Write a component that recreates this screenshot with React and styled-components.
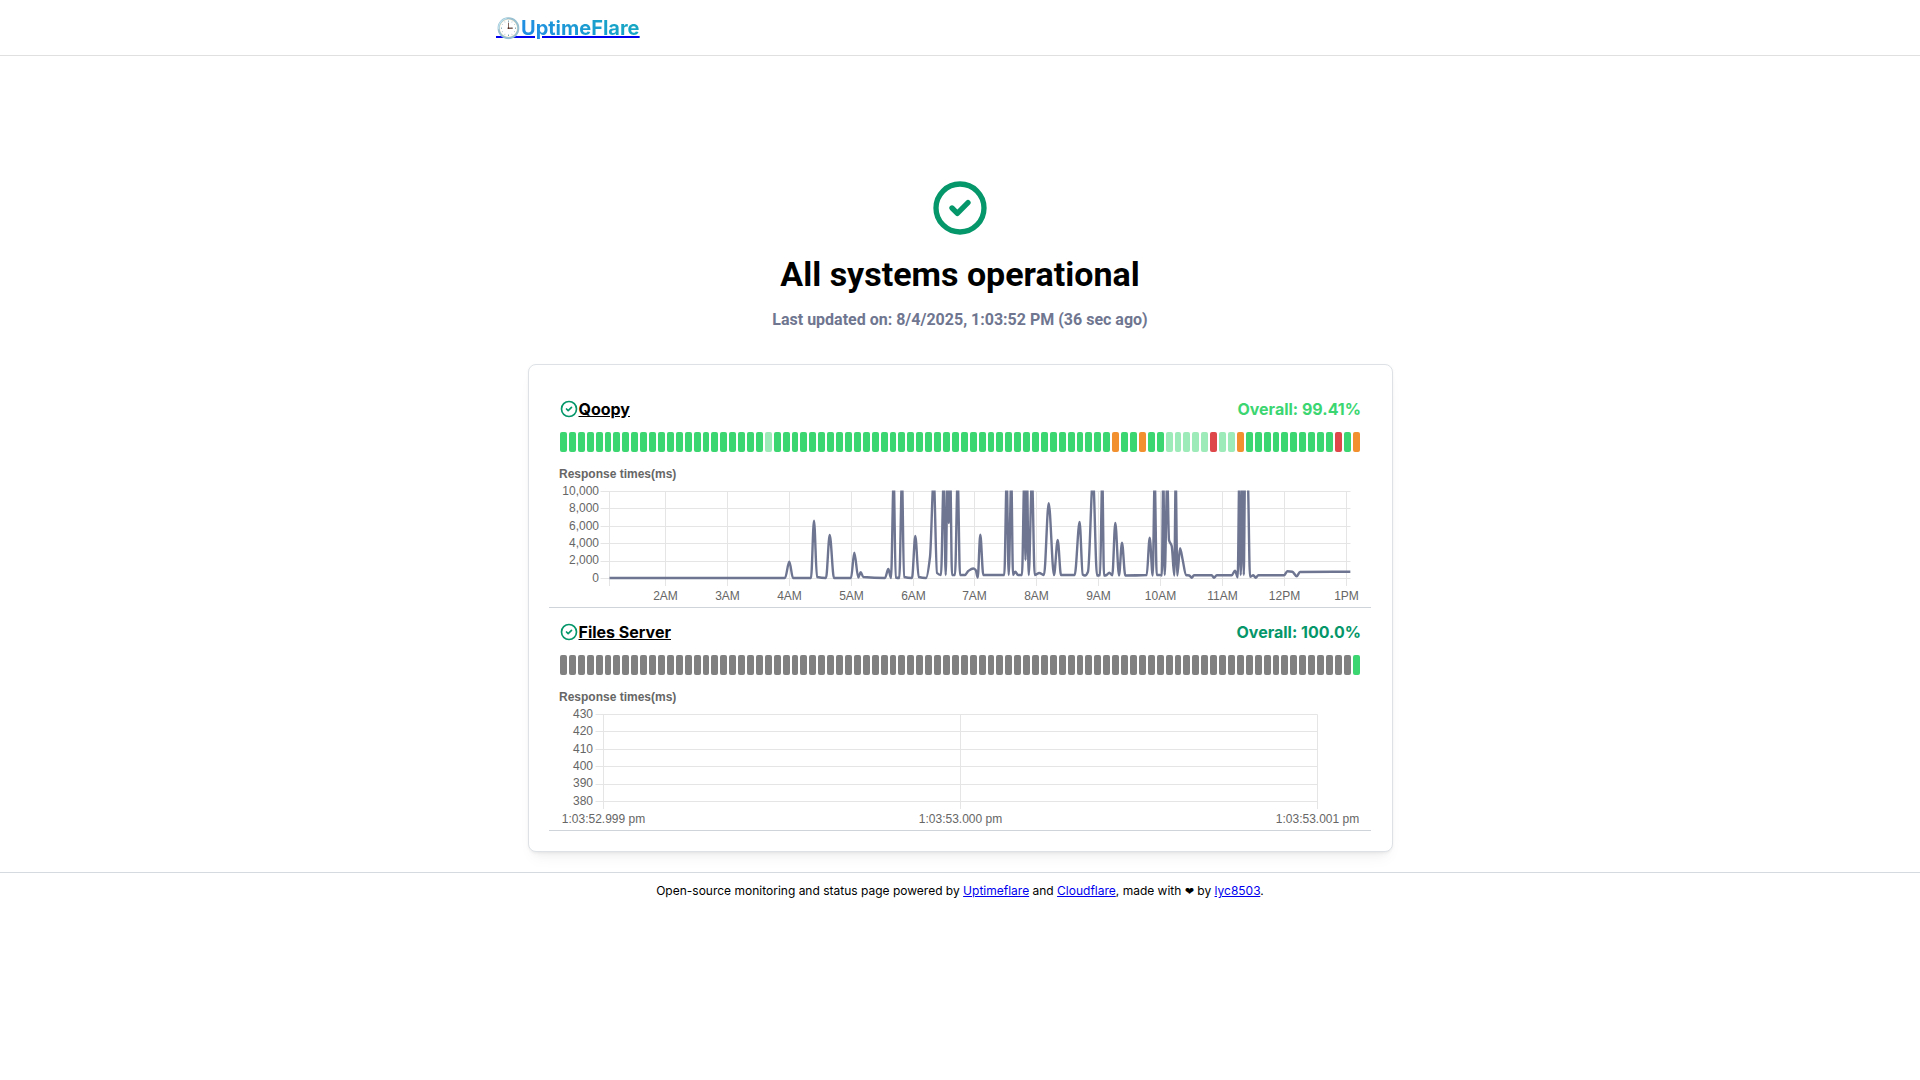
import React from 'react';
import styled, { createGlobalStyle } from 'styled-components';

const GlobalStyle = createGlobalStyle`
    html, body {
        margin: 0;
        padding: 0;
        background: #fff;
        color: #000;
        font-family: Inter, 'Liberation Sans', sans-serif;
    }
`;

// Header
const Header = styled.header`
    height: 55px;
    border-bottom: 1px solid #e0e0e0;
`;

const HeaderInner = styled.div`
    box-sizing: border-box;
    width: 960px;
    height: 100%;
    margin: 0 auto;
    padding: 0 16px;
    display: flex;
    align-items: center;
`;

const LogoLink = styled.a`
    color: #0000ee;
    font-size: 20px;
    font-weight: 700;
    line-height: 1.3;
    text-decoration: underline;
`;

const GradientText = styled.span`
    background: linear-gradient(45deg, #228be6, #15aabf);
    -webkit-background-clip: text;
    background-clip: text;
    -webkit-text-fill-color: transparent;
`;

// Overall status
const Main = styled.main`
    padding-top: 120px;
    display: flex;
    flex-direction: column;
    align-items: center;
`;

const BigIcon = styled.svg`
    display: block;
    width: 64px;
    height: 64px;
    fill: none;
    stroke: #059669;
    stroke-width: 2;
    stroke-linecap: round;
    stroke-linejoin: round;
`;

const Title = styled.h1`
    margin: 12px 0 0;
    font-family: Roboto, 'Liberation Sans', sans-serif;
    font-size: 34px;
    line-height: 44px;
    font-weight: 700;
`;

const Updated = styled.div`
    margin-top: 11px;
    font-family: Roboto, 'Liberation Sans', sans-serif;
    font-size: 16px;
    line-height: 25px;
    font-weight: 700;
    color: #6f7690;
`;

// Monitor card
const Card = styled.section`
    box-sizing: border-box;
    width: 865px;
    margin: 32px 0 0 1px;
    padding: 20px 21px 20px 20px;
    background: #fff;
    border: 1px solid #dee2e6;
    border-radius: 8px;
    box-shadow: 0 1px 3px rgba(0, 0, 0, 0.05), 0 10px 15px -5px rgba(0, 0, 0, 0.05), 0 7px 7px -5px rgba(0, 0, 0, 0.04);
`;

const Item = styled.article`
    height: 223px;
    box-sizing: border-box;
    padding: 10px 10px 0;
    border-bottom: 1px solid #ced4da;
`;

const TitleRow = styled.div`
    height: 28px;
    display: flex;
    align-items: center;
    justify-content: space-between;
`;

const Name = styled.div`
    display: flex;
    align-items: center;
`;

const SmallIcon = styled.svg`
    display: block;
    width: 20px;
    height: 20px;
    margin-right: -0.5px;
    fill: none;
    stroke: #059669;
    stroke-width: 2;
    stroke-linecap: round;
    stroke-linejoin: round;
`;

const NameLink = styled.a`
    color: #000;
    font-size: 16px;
    font-weight: 700;
    line-height: 1.3;
    text-decoration: underline;
`;

const Overall = styled.div`
    font-size: 16px;
    font-weight: 700;
    color: ${(p) => p.$color};
`;

const BarRow = styled.div`
    margin: 9px 1px 0;
    display: flex;
    gap: 2px;
    height: 20px;
`;

const Bar = styled.div`
    flex: 1;
    border-radius: 2px;
    background: ${(p) => p.$color};
`;

const ChartTitle = styled.div`
    margin-top: 15px;
    font-family: 'Liberation Sans', Arial, sans-serif;
    font-size: 12px;
    line-height: 14px;
    font-weight: 700;
    color: #666;
`;

const ChartSvg = styled.svg`
    display: block;
    margin-top: 2px;
    width: 802px;
    height: 124px;
    overflow: hidden;

    text {
        font-family: 'Liberation Sans', Arial, sans-serif;
        font-size: 12px;
        fill: #666;
    }

    .grid {
        stroke: #e5e5e5;
        stroke-width: 1;
    }

    .line {
        fill: none;
        stroke: #6e7591;
        stroke-width: 2.4;
        stroke-linejoin: round;
    }
`;

// Footer
const Footer = styled.footer`
    margin-top: 20px;
    border-top: 1px solid #d5d9e0;
    padding-top: 9px;
    text-align: center;
    font-size: 12px;
    line-height: 18px;

    a {
        color: #0000ee;
    }
`;

const Heart = styled.span`
    font-family: 'DejaVu Sans', sans-serif;
    font-size: 11px;
`;

const GREEN = '#3bd671';
const LIGHT = '#9debb8';
const ORANGE = '#f29030';
const RED = '#df484a';
const GRAY = '#808080';

const qoopyBars = Array.from({ length: 90 }, (_, i) => {
    if ([62, 65, 76, 89].includes(i)) return ORANGE;
    if ([73, 87].includes(i)) return RED;
    if ([23, 68, 69, 70, 71, 72, 74, 75].includes(i)) return LIGHT;
    return GREEN;
});

const filesBars = Array.from({ length: 90 }, (_, i) => (i === 89 ? GREEN : GRAY));

// chart coordinates: x is page px, TOP means the value runs over the chart area
const TOP = 478;
const LOW = 575;
const qoopyLine = [
    [609, 578], [785, 578], [789.3, 561.7], [793, 578], [811, 578], [814, 520.7], [817, 577], [826, 578],
    [829.7, 535], [834, 578], [851, 578], [854.3, 552.7], [858.3, 577.5], [860.7, 572.3], [863.3, 577], [885, 578],
    [888.3, 569], [891, 578], [893.7, TOP], [895.7, 577.5], [899.3, 578], [902, TOP], [904, 577], [912, 578],
    [915.3, 536], [918.7, 577], [926, 578], [930, 557], [933.7, TOP], [937, 573], [941, LOW], [943.7, TOP],
    [945.7, LOW], [947.5, TOP], [948.8, 523], [950.3, TOP], [952, LOW], [955, LOW], [957.7, TOP], [960, LOW],
    [965, LOW], [968.3, 571], [973.3, 568.5], [975.7, 570], [977.7, 577.5], [980.3, 534.7], [983.3, LOW], [1004.3, LOW],
    [1006.7, TOP], [1008.7, LOW], [1011.3, TOP], [1013, LOW], [1015.3, 571.7], [1018, LOW], [1022, LOW], [1024.3, TOP],
    [1025.5, 560], [1027, TOP], [1028.7, LOW], [1032, TOP], [1034.7, LOW], [1039.3, 573], [1044, LOW], [1048.7, 503.3],
    [1054, LOW], [1057.7, 540], [1061, LOW], [1074.7, LOW], [1079.6, 522], [1082.7, 574.5], [1085, 575.5], [1088, 571.7],
    [1093, TOP], [1097, 575.5], [1100, LOW], [1102.3, TOP], [1104, 575.5], [1106.7, LOW], [1109.3, 572.7], [1112.3, 575.3],
    [1115.3, 523], [1119, 575.5], [1122, 542.7], [1125.3, 575.5], [1146.7, LOW], [1149.7, 537.7], [1152.7, 575.5], [1154.7, TOP],
    [1156.7, LOW], [1160, LOW], [1161.8, 575.5], [1163.3, TOP], [1164.7, LOW], [1167.3, TOP], [1169, 540], [1171.7, 546],
    [1174.3, 575.5], [1175.7, TOP], [1177.3, 575.5], [1180, 548.3], [1182.7, 560], [1186, LOW], [1189.3, 575.5], [1191.7, 577.7],
    [1194, 575.3], [1211.7, 575.3], [1214, 577.7], [1216.7, 575.3], [1231.7, 575.3], [1235, 570.7], [1237.7, 577.3], [1239.3, TOP],
    [1240.7, LOW], [1242.6, TOP], [1243.8, LOW], [1245, TOP], [1247.7, TOP], [1250, 576.7], [1253.3, 575.3], [1255.7, 577.7],
    [1258.3, 575.3], [1284, 575.3], [1287.3, 571.3], [1292.3, 571.7], [1296.7, 576.3], [1300, 572], [1350.7, 571.7],
];

// monotone curve through the points so the spikes don't overshoot
const smoothPath = (points, originX, originY) => {
    const pts = points.map(([x, y]) => [x - originX, y - originY]);
    const slopes = pts.slice(1).map((p, i) => (p[1] - pts[i][1]) / (p[0] - pts[i][0]));
    const tangents = pts.map((_, i) => {
        const a = slopes[i - 1];
        const b = slopes[i];
        if (a === undefined) return b;
        if (b === undefined) return a;
        if (a * b <= 0) return 0;
        return (2 * a * b) / (a + b);
    });
    let d = `M${pts[0][0]} ${pts[0][1]}`;
    for (let i = 0; i < pts.length - 1; i++) {
        const [x0, y0] = pts[i];
        const [x1, y1] = pts[i + 1];
        const h = (x1 - x0) / 3;
        d += `C${(x0 + h).toFixed(2)} ${(y0 + tangents[i] * h).toFixed(2)} ${(x1 - h).toFixed(2)} ${(y1 - tangents[i + 1] * h).toFixed(2)} ${x1.toFixed(2)} ${y1.toFixed(2)}`;
    }
    return d;
};

const GRID_Y = [8.5, 25.5, 43.5, 60.5, 78.5, 95.5];
const LABEL_Y = [12, 29, 47, 64, 81, 99];

const ORIGIN_X = 559;
const ORIGIN_Y = 483;

const Chart = ({ yLabels, xTicks, axisX, endX, tickStart, labelEnd, line }) => (
    <ChartSvg viewBox="0 0 802 124">
        <defs>
            <clipPath id="plot">
                <rect x={axisX} y="7.5" width={endX - axisX} height="100" />
            </clipPath>
        </defs>
        {GRID_Y.map((y, i) => (
            <g key={y}>
                <line className="grid" x1={tickStart} x2={endX} y1={y} y2={y} />
                <text x={labelEnd} y={LABEL_Y[i]} textAnchor="end">{yLabels[i]}</text>
            </g>
        ))}
        {xTicks.map(({ x, label }) => (
            <g key={x}>
                <line className="grid" x1={x} x2={x} y1="8.5" y2="103" />
                {label && <text x={x} y="116.5" textAnchor="middle">{label}</text>}
            </g>
        ))}
        {line && <path className="line" clipPath="url(#plot)" d={smoothPath(line, ORIGIN_X, ORIGIN_Y)} />}
    </ChartSvg>
);

const CheckCircle = ({ as: Icon }) => (
    <Icon viewBox="0 0 24 24">
        <path d="M12 12m-9 0a9 9 0 1 0 18 0a9 9 0 1 0 -18 0" />
        <path d="M9 12l2 2l4 -4" />
    </Icon>
);

const hourTicks = [
    [609.5, ''], [665.5, '2AM'], [727.5, '3AM'], [789.5, '4AM'], [851.5, '5AM'], [913.5, '6AM'], [974.5, '7AM'],
    [1036.5, '8AM'], [1098.5, '9AM'], [1160.5, '10AM'], [1222.5, '11AM'], [1284.5, '12PM'], [1346.5, '1PM'],
].map(([x, label]) => ({ x: x - ORIGIN_X, label }));

const secondTicks = [
    [603.5, '1:03:52.999 pm'], [960.5, '1:03:53.000 pm'], [1317.5, '1:03:53.001 pm'],
].map(([x, label]) => ({ x: x - ORIGIN_X, label }));

const App = () => (
    <>
        <GlobalStyle />
        <Header>
            <HeaderInner>
                <LogoLink href="#">
                    🕒<GradientText>UptimeFlare</GradientText>
                </LogoLink>
            </HeaderInner>
        </Header>
        <Main>
            <CheckCircle as={BigIcon} />
            <Title>All systems operational</Title>
            <Updated>Last updated on: 8/4/2025, 1:03:52 PM (36 sec ago)</Updated>
            <Card>
                <Item>
                    <TitleRow>
                        <Name>
                            <CheckCircle as={SmallIcon} />
                            <NameLink href="#">Qoopy</NameLink>
                        </Name>
                        <Overall $color={GREEN}>Overall: 99.41%</Overall>
                    </TitleRow>
                    <BarRow>
                        {qoopyBars.map((color, i) => <Bar key={i} $color={color} />)}
                    </BarRow>
                    <ChartTitle>Response times(ms)</ChartTitle>
                    <Chart
                        yLabels={['10,000', '8,000', '6,000', '4,000', '2,000', '0']}
                        xTicks={hourTicks}
                        axisX={50.5}
                        endX={791.5}
                        tickStart={41.5}
                        labelEnd={40}
                        line={qoopyLine}
                    />
                </Item>
                <Item>
                    <TitleRow>
                        <Name>
                            <CheckCircle as={SmallIcon} />
                            <NameLink href="#">Files Server</NameLink>
                        </Name>
                        <Overall $color="#059669">Overall: 100.0%</Overall>
                    </TitleRow>
                    <BarRow>
                        {filesBars.map((color, i) => <Bar key={i} $color={color} />)}
                    </BarRow>
                    <ChartTitle>Response times(ms)</ChartTitle>
                    <Chart
                        yLabels={['430', '420', '410', '400', '390', '380']}
                        xTicks={secondTicks}
                        axisX={44.5}
                        endX={758.5}
                        tickStart={36.5}
                        labelEnd={34}
                    />
                </Item>
            </Card>
        </Main>
        <Footer>
            Open-source monitoring and status page powered by <a href="#">Uptimeflare</a> and{' '}
            <a href="#">Cloudflare</a>, made with <Heart>❤</Heart> by <a href="#">lyc8503</a>.
        </Footer>
    </>
);

export default App;
